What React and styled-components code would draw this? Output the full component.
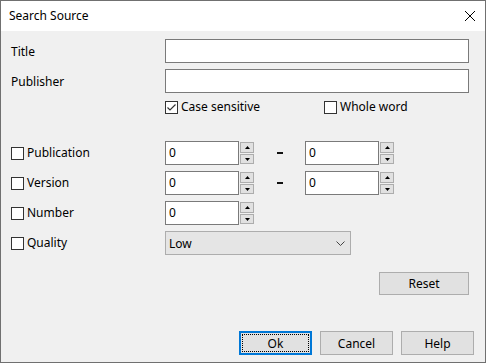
import React from 'react';
import styled, {createGlobalStyle} from 'styled-components';

const GlobalStyle = createGlobalStyle`
  html, body {
    margin: 0;
    padding: 0;
    width: 486px;
    height: 363px;
    overflow: hidden;
    background: #f0f0f0;
  }
  * {
    box-sizing: border-box;
  }
`;

const Window = styled.div`
  width: 486px;
  height: 363px;
  border: 1px solid #707070;
  background: #f0f0f0;
  display: flex;
  flex-direction: column;
  font-family: "Noto Sans", "Segoe UI", sans-serif;
  font-size: 12px;
  color: #000;
`;
const TitleBar = styled.div`
  height: 30px;
  flex: none;
  background: #fff;
  display: flex;
  align-items: center;
  justify-content: space-between;
  padding: 0 9px 0 8px;
`;
const TitleText = styled.span`
  font-size: 12px;
  line-height: 16px;
`;
const Body = styled.div`
  flex: 1;
  display: flex;
  flex-direction: column;
  padding: 0 16px 0 10px;
`;
const Row = styled.div`
  display: grid;
  grid-template-columns: 154px 1fr;
  align-items: center;
  height: ${p => p.$h || 24}px;
  margin-top: ${p => p.$mt || 0}px;
`;
const Label = styled.span`
  line-height: 16px;
  padding-top: 1px;
`;
const TextInput = styled.div`
  height: 24px;
  background: #fff;
  border: 1px solid #7a7a7a;
`;
const CheckLabel = styled.label`
  display: flex;
  align-items: center;
  gap: 3px;
  width: ${p => p.$w ? `${p.$w}px` : 'auto'};
  line-height: 16px;
`;
const Box = styled.span`
  width: 13px;
  height: 13px;
  flex: none;
  border: 1px solid #333;
  background: #fff;
  display: flex;
  align-items: center;
  justify-content: center;
`;
const Options = styled.div`
  display: flex;
  align-items: center;
`;
const SpinGroup = styled.div`
  display: flex;
  align-items: center;
`;
const SpinInput = styled.div`
  width: 74px;
  height: 24px;
  background: #fff;
  border: 1px solid #7a7a7a;
  padding: 0 3px;
  line-height: 22px;
`;
const SpinButtons = styled.div`
  width: 14px;
  margin-left: 1px;
  display: flex;
  flex-direction: column;
  gap: 1px;
`;
const SpinButton = styled.div`
  height: ${p => p.$h}px;
  background: #e1e1e1;
  border: 1px solid #adadad;
  display: flex;
  align-items: center;
  justify-content: center;
`;
const DashCell = styled.div`
  width: 51px;
  display: flex;
  justify-content: center;
`;
const Dash = styled.span`
  width: 6px;
  height: 2px;
  background: #111;
  margin-left: 1px;
`;
const Combo = styled.div`
  width: 186px;
  height: 24px;
  background: #e5e5e5;
  border: 1px solid #adadad;
  display: flex;
  align-items: center;
  justify-content: space-between;
  padding: 0 5px 0 3px;
`;
const ResetRow = styled.div`
  display: flex;
  justify-content: flex-end;
  margin-top: 17px;
`;
const Button = styled.div`
  width: ${p => p.$w || 73}px;
  height: ${p => p.$h || 24}px;
  background: #e1e1e1;
  border: 1px solid #adadad;
  display: flex;
  align-items: center;
  justify-content: center;
  position: relative;
  ${p => p.$default && `
    border: 2px solid #0078d7;
    &::after {
      content: '';
      position: absolute;
      inset: 1px;
      border: 1px dotted #000;
    }
  `}
`;
const Footer = styled.div`
  display: flex;
  justify-content: flex-end;
  gap: 8px;
  margin-top: 36px;
  margin-right: -5px;
`;

function Check({checked}) {
  return (
    <Box>
      {checked && (
        <svg width="11" height="11" viewBox="0 0 11 11">
          <path d="M1.5 5.5 L4 8 L9.5 2.5" fill="none" stroke="#333" strokeWidth="1.2" />
        </svg>
      )}
    </Box>
  );
}

function Arrow({down}) {
  return (
    <svg width="5" height="3" viewBox="0 0 5 3">
      <path d={down ? 'M0 0 H5 L2.5 3 Z' : 'M0 3 H5 L2.5 0 Z'} fill="#000" />
    </svg>
  );
}

function Spin() {
  return (
    <SpinGroup>
      <SpinInput>0</SpinInput>
      <SpinButtons>
        <SpinButton $h={11}><Arrow /></SpinButton>
        <SpinButton $h={10}><Arrow down /></SpinButton>
      </SpinButtons>
    </SpinGroup>
  );
}

function Range() {
  return (
    <SpinGroup>
      <Spin />
      <DashCell><Dash /></DashCell>
      <Spin />
    </SpinGroup>
  );
}

export default function App() {
  return (
    <>
      <GlobalStyle />
      <Window>
        <TitleBar>
          <TitleText>Search Source</TitleText>
          <svg width="12" height="12" viewBox="0 0 12 12">
            <path d="M1 1 L11 11 M11 1 L1 11" stroke="#000" strokeWidth="1" />
          </svg>
        </TitleBar>
        <Body>
          <Row $mt={8}>
            <Label>Title</Label>
            <TextInput />
          </Row>
          <Row $mt={6}>
            <Label>Publisher</Label>
            <TextInput />
          </Row>
          <Row $mt={4} $h={20}>
            <span />
            <Options>
              <CheckLabel $w={159}><Check checked />Case sensitive</CheckLabel>
              <CheckLabel><Check />Whole word</CheckLabel>
            </Options>
          </Row>
          <Row $mt={24}>
            <CheckLabel><Check />Publication</CheckLabel>
            <Range />
          </Row>
          <Row $mt={6}>
            <CheckLabel><Check />Version</CheckLabel>
            <Range />
          </Row>
          <Row $mt={6}>
            <CheckLabel><Check />Number</CheckLabel>
            <Spin />
          </Row>
          <Row $mt={6}>
            <CheckLabel><Check />Quality</CheckLabel>
            <Combo>
              <span>Low</span>
              <svg width="9" height="5" viewBox="0 0 9 5">
                <path d="M0.5 0.5 L4.5 4.5 L8.5 0.5" fill="none" stroke="#444" strokeWidth="1" />
              </svg>
            </Combo>
          </Row>
          <ResetRow>
            <Button $w={90} $h={23}>Reset</Button>
          </ResetRow>
          <Footer>
            <Button $default>Ok</Button>
            <Button>Cancel</Button>
            <Button>Help</Button>
          </Footer>
        </Body>
      </Window>
    </>
  );
}
